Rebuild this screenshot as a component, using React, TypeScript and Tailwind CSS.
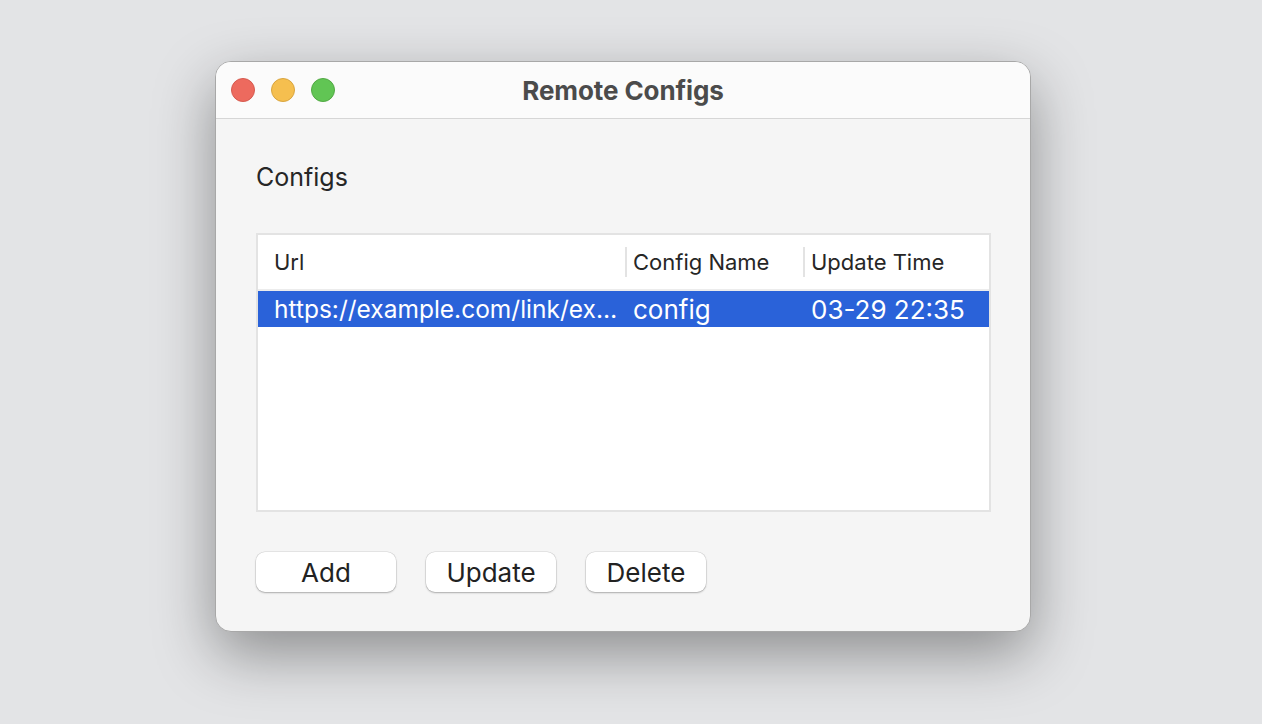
const rows = [
  { url: "https://example.com/link/example", name: "config", time: "03-29 22:35" },
];

function TrafficLights() {
  return (
    <div className="flex items-center gap-4">
      <span className="w-6 h-6 rounded-full bg-[#ed6a5e] border border-[#d65a4f]" />
      <span className="w-6 h-6 rounded-full bg-[#f5bf4f] border border-[#d9a53f]" />
      <span className="w-6 h-6 rounded-full bg-[#61c554] border border-[#52a944]" />
    </div>
  );
}

export default function App() {
  return (
    <div className="w-[1262px] h-[724px] bg-[#e3e4e6] pt-[61px] pl-[215px] font-['Inter',sans-serif]">
      <div className="w-[816px] h-[571px] rounded-[16px] bg-[#f5f5f5] border border-[#a8a8a8] shadow-[0_22px_60px_rgba(0,0,0,0.38)] overflow-hidden flex flex-col">
        <div className="relative h-[57px] bg-[#fbfbfb] border-b border-[#d6d6d6] flex items-center px-[15px] shrink-0">
          <TrafficLights />
          <div className="absolute inset-0 flex items-center justify-center text-[26px] font-bold text-[#4b4b4b] tracking-[-0.1px]">
            Remote Configs
          </div>
        </div>
        <div className="flex-1 px-[40px] pt-[46px]">
          <div className="text-[25px] text-[#262626] leading-none">Configs</div>
          <div className="mt-[43px] w-[735px] h-[279px] bg-white border-2 border-[#e3e3e3] flex flex-col">
            <div className="h-[56px] flex items-center border-b-2 border-[#ececec] text-[22px] text-[#262626]">
              <div className="w-[367px] pl-[16px]">Url</div>
              <div className="w-[178px] h-[30px] flex items-center border-l-2 border-[#e3e3e3] pl-[6px]">Config Name</div>
              <div className="flex-1 h-[30px] flex items-center border-l-2 border-[#e3e3e3] pl-[6px]">Update Time</div>
            </div>
            {rows.map((r, i) => (
              <div key={i} className="h-[36px] flex items-center bg-[#2a62d9] text-white text-[26px]">
                <div className="w-[367px] pl-[16px] text-[24.5px] truncate">{r.url}</div>
                <div className="w-[178px] pl-[8px]">{r.name}</div>
                <div className="flex-1 pl-[8px]">{r.time}</div>
              </div>
            ))}
          </div>
          <div className="mt-[40px] flex gap-[30px] text-[26px] text-[#222]">
            <button className="w-[140px] h-[40px] rounded-[9px] bg-white shadow-[0_1px_2px_rgba(0,0,0,0.25),0_0_0_0.5px_rgba(0,0,0,0.12)]">Add</button>
            <button className="w-[130px] h-[40px] rounded-[9px] bg-white shadow-[0_1px_2px_rgba(0,0,0,0.25),0_0_0_0.5px_rgba(0,0,0,0.12)]">Update</button>
            <button className="w-[120px] h-[40px] rounded-[9px] bg-white shadow-[0_1px_2px_rgba(0,0,0,0.25),0_0_0_0.5px_rgba(0,0,0,0.12)]">Delete</button>
          </div>
        </div>
      </div>
    </div>
  );
}
